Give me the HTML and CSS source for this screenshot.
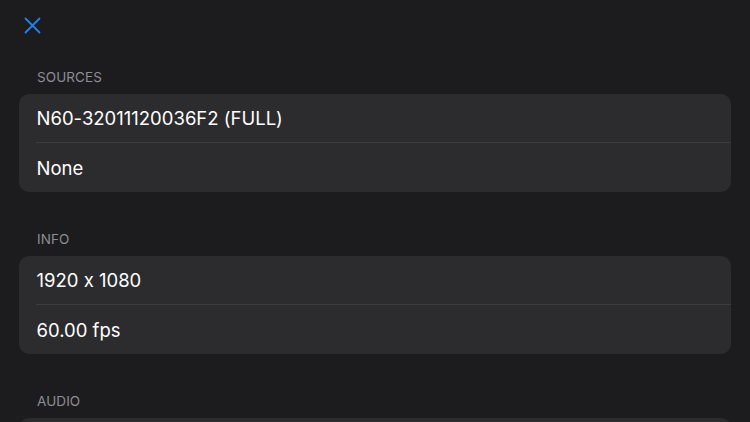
FILE: index.html
```html
<!DOCTYPE html>
<html>
<head>
<meta charset="utf-8">
<link rel="stylesheet" href="styles.css">
</head>
<body>
<div class="page">
  <div class="topbar">
    <button class="close" aria-label="Close">
      <svg width="17" height="17" viewBox="0 0 17 17"><path d="M1.5 1.5 L15.5 15.5 M15.5 1.5 L1.5 15.5" stroke="#1d83f0" stroke-width="1.8" stroke-linecap="round" fill="none"/></svg>
    </button>
  </div>
  <section class="section">
    <div class="section-header">SOURCES</div>
    <div class="card">
      <div class="row"><div class="row-inner">N60-32011120036F2 (FULL)</div></div>
      <div class="row"><div class="row-inner">None</div></div>
    </div>
  </section>
  <section class="section">
    <div class="section-header">INFO</div>
    <div class="card">
      <div class="row"><div class="row-inner">1920 x 1080</div></div>
      <div class="row"><div class="row-inner">60.00 fps</div></div>
    </div>
  </section>
  <section class="section">
    <div class="section-header">AUDIO</div>
    <div class="card">
      <div class="row"><div class="row-inner">&nbsp;</div></div>
    </div>
  </section>
</div>
</body>
</html>
```
FILE: styles.css
```css
html, body {
  margin: 0;
  padding: 0;
  background: #1c1c1e;
}
body {
  font-family: Inter, "Noto Sans", "Liberation Sans", sans-serif;
  font-feature-settings: "calt" 0;
  color: #ffffff;
}
.page {
  display: flex;
  flex-direction: column;
  height: 422px;
  overflow: hidden;
}
.topbar {
  flex: none;
  height: 69px;
  display: flex;
  align-items: flex-start;
  padding-left: 24px;
  padding-top: 17px;
  box-sizing: border-box;
}
.close {
  background: none;
  border: none;
  padding: 0;
  width: 17px;
  height: 17px;
  display: flex;
}
.section {
  flex: none;
  display: flex;
  flex-direction: column;
  margin-bottom: 39px;
}
.section-header {
  font-size: 13.5px;
  line-height: 16px;
  color: #8d8d93;
  padding-left: 37px;
  margin-bottom: 9px;
  letter-spacing: 0.1px;
}
.card {
  margin: 0 19px;
  background: #2c2c2e;
  border-radius: 10px;
  display: flex;
  flex-direction: column;
}
.row {
  padding-left: 17px;
}
.row-inner {
  height: 48px;
  display: flex;
  align-items: center;
  font-size: 18.5px;
  border-bottom: 1px solid #3d3d40;
  padding-left: 0.5px;
}
.row:last-child .row-inner {
  height: 49px;
  border-bottom: none;
}
```
